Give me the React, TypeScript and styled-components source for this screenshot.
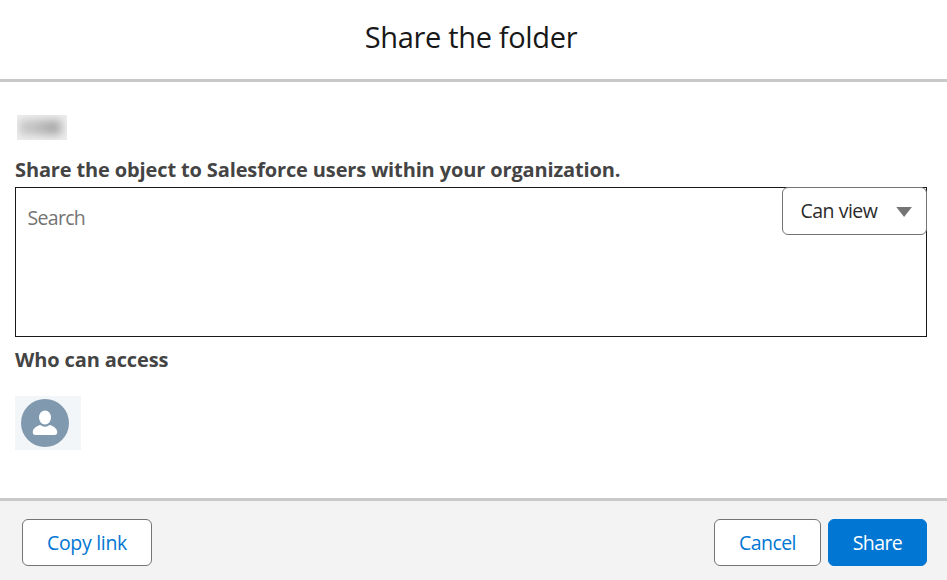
import React from 'react';
import styled, { createGlobalStyle } from 'styled-components';

const GlobalStyle = createGlobalStyle`
  * { box-sizing: border-box; }
  body { margin: 0; background: #fff; font-family: "Segoe UI", "Open Sans", sans-serif; }
`;

const Dialog = styled.main`
  display: flex;
  flex-direction: column;
  width: 100%;
  height: 580px;
  overflow: hidden;
`;

const Header = styled.header`
  height: 82px;
  flex: none;
  padding-top: 17px;
  padding-right: 5px;
  border-bottom: 3px solid #c9c9c9;
  text-align: center;
`;

const Title = styled.h1`
  margin: 0;
  font-size: 29px;
  line-height: 40px;
  font-weight: 400;
  letter-spacing: -0.33px;
  color: #181818;
`;

const Body = styled.section`
  flex: 1;
  padding: 33px 20px 0 15px;
`;

const RedactedName = styled.div`
  width: 50px;
  height: 25px;
  margin: 0 0 17px 2px;
  overflow: hidden;
  background: #eeeeee;
  display: flex;
  align-items: center;
  justify-content: center;
`;

const RedactedInk = styled.span`
  width: 43px;
  height: 15px;
  margin-right: 4px;
  flex: none;
  background: linear-gradient(90deg, #cccccc, #bcbcbc 45%, #a9a9a9 75%, #b4b4b4);
  filter: blur(4px);
`;

const Label = styled.h2<{ $tracking: number }>`
  margin: 0;
  height: 30px;
  line-height: 26px;
  font-size: 20px;
  font-weight: 700;
  letter-spacing: ${(p) => p.$tracking}px;
  color: #444;
  white-space: nowrap;
`;

const SearchBox = styled.div`
  display: flex;
  justify-content: space-between;
  align-items: flex-start;
  height: 150px;
  margin-bottom: 10px;
  border: 1px solid #181818;
`;

const SearchInput = styled.input`
  flex: 1;
  height: 28px;
  margin-top: 16px;
  padding: 0 0 0 11.5px;
  border: 0;
  outline: 0;
  background: transparent;
  font: 400 19.5px/28px "Segoe UI", "Open Sans", sans-serif;
  letter-spacing: -0.7px;
  color: #181818;
  &::placeholder { color: #747474; opacity: 1; }
`;

const Permission = styled.button`
  display: flex;
  align-items: center;
  justify-content: space-between;
  width: 145px;
  height: 48px;
  margin: -1px -1px 0 0;
  padding: 0 14px 0 17.5px;
  border: 1px solid #747474;
  border-radius: 6px;
  background: #fff;
  font: 400 19.5px/28px "Segoe UI", "Open Sans", sans-serif;
  letter-spacing: -0.5px;
  color: #2b2b2b;
`;

const AccessTile = styled.div`
  width: 66px;
  height: 54px;
  margin-top: 19px;
  padding: 3px 6px;
  background: #f3f6f9;
`;

const Footer = styled.footer`
  display: flex;
  flex: none;
  height: 82px;
  padding: 18px 20px 0 22px;
  gap: 7px;
  border-top: 3px solid #c9c9c9;
  background: #f3f3f3;
`;

const Button = styled.button<{ $width: number; $primary?: boolean; $end?: boolean; $tracking: number }>`
  width: ${(p) => p.$width}px;
  height: 47px;
  margin-left: ${(p) => (p.$end ? 'auto' : '0')};
  padding: 1px 0 0;
  border: 1px solid ${(p) => (p.$primary ? '#0176d3' : '#747474')};
  border-radius: 6px;
  background: ${(p) => (p.$primary ? '#0176d3' : '#fff')};
  color: ${(p) => (p.$primary ? '#fff' : '#0176d3')};
  font: 400 19.5px/28px "Segoe UI", "Open Sans", sans-serif;
  letter-spacing: ${(p) => p.$tracking}px;
`;

const UserIcon = () => (
  <svg width="48" height="48" viewBox="0 0 48 48" display="block">
    <circle cx="24" cy="24" r="24" fill="#8199af" />
    <ellipse cx="24" cy="18.5" rx="6" ry="6.9" fill="#fff" />
    <path
      d="M18.2 26.3 Q19.2 25.7 20.2 26.4 Q24 29.2 27.8 26.4 Q28.8 25.7 29.8 26.3 C33.6 28 36.2 30.1 36.2 33.3 Q36.2 36 33.5 36 H14.5 Q11.8 36 11.8 33.3 C11.8 30.1 14.4 28 18.2 26.3Z"
      fill="#fff"
    />
  </svg>
);

const Caret = () => (
  <svg width="16" height="12" viewBox="0 0 16 12">
    <path d="M0.3 2 H15.9 L8.1 12Z" fill="#747474" />
  </svg>
);

export default function App() {
  return (
    <>
      <GlobalStyle />
      <Dialog>
        <Header>
          <Title>Share the folder</Title>
        </Header>
        <Body>
          <RedactedName>
            <RedactedInk />
          </RedactedName>
          <Label $tracking={-0.135}>Share the object to Salesforce users within your organization.</Label>
          <SearchBox>
            <SearchInput placeholder="Search" />
            <Permission>
              Can view
              <Caret />
            </Permission>
          </SearchBox>
          <Label $tracking={-0.13}>Who can access</Label>
          <AccessTile>
            <UserIcon />
          </AccessTile>
        </Body>
        <Footer>
          <Button $width={130} $tracking={-0.3}>Copy link</Button>
          <Button $width={107} $end $tracking={-0.55}>Cancel</Button>
          <Button $width={99} $primary $tracking={-0.6}>Share</Button>
        </Footer>
      </Dialog>
    </>
  );
}
